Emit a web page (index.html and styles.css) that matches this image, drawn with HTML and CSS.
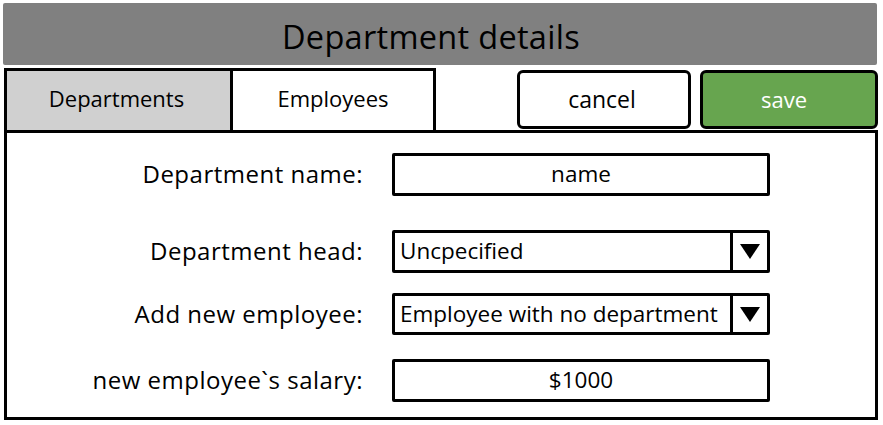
FILE: index.html
```html
<!DOCTYPE html>
<html>
<head>
<meta charset="utf-8">
<link rel="stylesheet" href="styles.css">
</head>
<body>
<div class="page">
  <header class="title-bar"><h1 class="title">Department details</h1></header>
  <div class="toolbar">
    <div class="tabs">
      <div class="tab tab-active">Departments</div>
      <div class="tab">Employees</div>
    </div>
    <div class="actions">
      <button class="btn btn-cancel">cancel</button>
      <button class="btn btn-save">save</button>
    </div>
  </div>
  <section class="panel">
    <div class="row row-name">
      <label class="label">Department name:</label>
      <div class="field field-center">name</div>
    </div>
    <div class="row row-head">
      <label class="label">Department head:</label>
      <div class="field select"><span class="select-text">Uncpecified</span><span class="select-btn"><span class="arrow"></span></span></div>
    </div>
    <div class="row row-add">
      <label class="label">Add new employee:</label>
      <div class="field select"><span class="select-text">Employee with no department</span><span class="select-btn"><span class="arrow"></span></span></div>
    </div>
    <div class="row row-salary">
      <label class="label">new employee`s salary:</label>
      <div class="field field-center">$1000</div>
    </div>
  </section>
</div>
</body>
</html>
```
FILE: styles.css
```css
html, body {
  margin: 0;
  padding: 0;
  background: #fff;
}
body {
  font-family: "Open Sans", "Noto Sans", sans-serif;
  color: #000;
}
.page {
  width: 883px;
  height: 425px;
  padding-top: 3px;
  box-sizing: border-box;
}
.title-bar {
  margin: 0 6px 0 3px;
  height: 62px;
  background: #808080;
  border-radius: 2px;
  display: flex;
  align-items: center;
  justify-content: center;
}
.title {
  margin: 0;
  font-weight: 400;
  font-size: 32.5px;
  letter-spacing: 0.3px;
  padding-top: 4px;
  padding-right: 18px;
}
.toolbar {
  display: flex;
  justify-content: space-between;
  margin: 3px 5px 0 4px;
  height: 62px;
}
.tabs {
  display: flex;
  align-items: stretch;
}
.tab {
  box-sizing: border-box;
  border: 3px solid #000;
  border-bottom: none;
  display: flex;
  align-items: center;
  justify-content: center;
  font-size: 22px;
  background: #fff;
  padding-bottom: 6px;
}
.tab-active {
  width: 229px;
  background: #d0d0d0;
  padding-right: 4px;
}
.tab + .tab {
  width: 203px;
  border-left: none;
}
.actions {
  display: flex;
  gap: 9px;
  padding-top: 2px;
  padding-bottom: 1px;
}
.btn {
  box-sizing: border-box;
  border: 3px solid #000;
  border-radius: 6px;
  font-family: inherit;
  font-size: 22px;
  padding: 0 0 2px 0;
}
.btn-cancel {
  width: 174px;
  background: #fff;
  color: #000;
  font-size: 23px;
  padding-right: 4px;
}
.btn-save {
  width: 178px;
  background: #67a54f;
  color: #fff;
  padding-right: 10px;
}
.panel {
  box-sizing: border-box;
  margin: 0 5px 0 4px;
  height: 290px;
  border: 3px solid #000;
  padding-top: 20px;
  display: flex;
  flex-direction: column;
}
.row {
  display: grid;
  grid-template-columns: 356px 378px;
  column-gap: 29px;
  align-items: center;
  height: 43px;
}
.row-head { margin-top: 34px; }
.row-add { margin-top: 20px; height: 42px; }
.row-salary { margin-top: 24px; }
.label {
  text-align: right;
  font-size: 24px;
  letter-spacing: 0.5px;
  padding-bottom: 2px;
}
.field {
  box-sizing: border-box;
  height: 100%;
  border: 3px solid #000;
  border-radius: 2px;
  font-size: 22.5px;
  display: flex;
  align-items: center;
}
.field-center {
  justify-content: center;
  padding-bottom: 2px;
}
.select {
  align-items: stretch;
}
.select-text {
  flex: 1;
  padding-left: 5px;
  padding-bottom: 2px;
  display: flex;
  align-items: center;
}
.select-btn {
  width: 34px;
  border-left: 3px solid #000;
  display: flex;
  align-items: center;
  justify-content: center;
}
.arrow {
  width: 0;
  height: 0;
  border-left: 10px solid transparent;
  border-right: 10px solid transparent;
  border-top: 15px solid #000;
}
```
